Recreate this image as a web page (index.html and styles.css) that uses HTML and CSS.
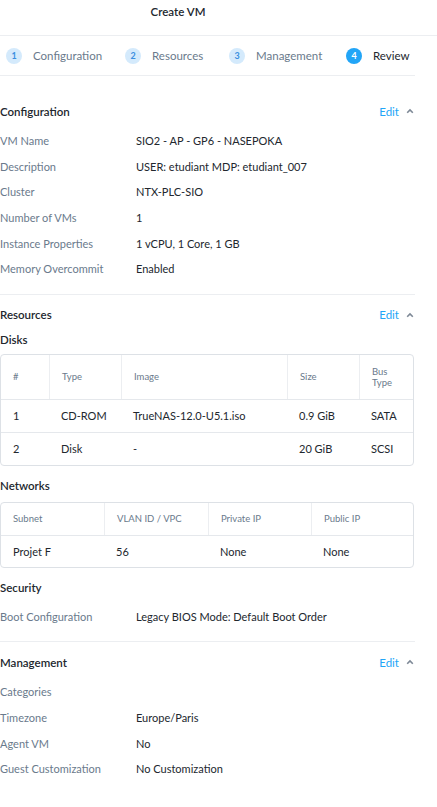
FILE: index.html
```html
<!DOCTYPE html>
<html>
<head>
<meta charset="utf-8">
<link rel="stylesheet" href="styles.css">
</head>
<body>
<div class="page">
  <header class="topbar"><div class="title">Create VM</div></header>
  <div class="main">
    <nav class="stepper">
      <div class="step"><span class="num">1</span><span class="lbl">Configuration</span></div>
      <div class="step"><span class="num">2</span><span class="lbl">Resources</span></div>
      <div class="step"><span class="num">3</span><span class="lbl">Management</span></div>
      <div class="step active"><span class="num">4</span><span class="lbl">Review</span></div>
    </nav>

    <section class="sec first">
      <div class="sec-head"><h2>Configuration</h2><div class="edit">Edit <svg class="caret" width="8" height="6" viewBox="0 0 8 6"><path d="M1.2 4.8 L4 2 L6.8 4.8" fill="none" stroke="#7d8896" stroke-width="1.6"/></svg></div></div>
      <div class="row"><span class="k">VM Name</span><span class="v">SIO2 - AP - GP6 - NASEPOKA</span></div>
      <div class="row"><span class="k">Description</span><span class="v">USER: etudiant MDP: etudiant_007</span></div>
      <div class="row"><span class="k">Cluster</span><span class="v">NTX-PLC-SIO</span></div>
      <div class="row"><span class="k">Number of VMs</span><span class="v">1</span></div>
      <div class="row"><span class="k">Instance Properties</span><span class="v">1 vCPU, 1 Core, 1 GB</span></div>
      <div class="row"><span class="k">Memory Overcommit</span><span class="v">Enabled</span></div>
    </section>

    <section class="sec">
      <div class="sec-head"><h2>Resources</h2><div class="edit">Edit <svg class="caret" width="8" height="6" viewBox="0 0 8 6"><path d="M1.2 4.8 L4 2 L6.8 4.8" fill="none" stroke="#7d8896" stroke-width="1.6"/></svg></div></div>
      <h3>Disks</h3>
      <div class="tbl disks">
        <div class="tr th"><span>#</span><span>Type</span><span>Image</span><span>Size</span><span>Bus<br>Type</span></div>
        <div class="tr"><span>1</span><span>CD-ROM</span><span>TrueNAS-12.0-U5.1.iso</span><span>0.9 GiB</span><span>SATA</span></div>
        <div class="tr"><span>2</span><span>Disk</span><span>-</span><span>20 GiB</span><span>SCSI</span></div>
      </div>
      <h3 class="mt">Networks</h3>
      <div class="tbl nets">
        <div class="tr th"><span>Subnet</span><span>VLAN ID / VPC</span><span>Private IP</span><span>Public IP</span></div>
        <div class="tr"><span>Projet F</span><span>56</span><span>None</span><span>None</span></div>
      </div>
      <h3 class="mt sec-sub">Security</h3>
      <div class="row"><span class="k">Boot Configuration</span><span class="v">Legacy BIOS Mode: Default Boot Order</span></div>
    </section>

    <section class="sec last">
      <div class="sec-head"><h2>Management</h2><div class="edit">Edit <svg class="caret" width="8" height="6" viewBox="0 0 8 6"><path d="M1.2 4.8 L4 2 L6.8 4.8" fill="none" stroke="#7d8896" stroke-width="1.6"/></svg></div></div>
      <div class="row"><span class="k">Categories</span><span class="v"></span></div>
      <div class="row"><span class="k">Timezone</span><span class="v">Europe/Paris</span></div>
      <div class="row"><span class="k">Agent VM</span><span class="v">No</span></div>
      <div class="row"><span class="k">Guest Customization</span><span class="v">No Customization</span></div>
    </section>
  </div>
</div>
</body>
</html>
```
FILE: styles.css
```css
* { box-sizing: border-box; margin: 0; padding: 0; }
html, body { background: #fff; }
body {
  font-family: Lato, "Open Sans", sans-serif;
  font-size: 11px;
  color: #22272e;
}
.page { width: 437px; }
.topbar {
  height: 36px;
  border-bottom: 1px solid #eceef1;
  display: flex;
  align-items: center;
}
.title {
  width: 356px;
  text-align: center;
  font-size: 11.5px;
  font-weight: 600;
  color: #22272e;
  padding-bottom: 12px;
}
.main { width: 415px; }
.stepper {
  height: 40px;
  display: flex;
  align-items: center;
  border-bottom: 1px solid #eceef1;
  padding-left: 6px;
}
.step { display: flex; align-items: center; }
.step .num {
  width: 16px; height: 16px; border-radius: 50%;
  background: #d4eafc; color: #3b8fe0;
  font-size: 9px; font-weight: 700;
  display: flex; align-items: center; justify-content: center;
}
.step .lbl { margin-left: 11px; color: #6a7a8c; font-size: 11.5px; }
.step:nth-child(1) { width: 119px; }
.step:nth-child(2) { width: 104px; }
.step:nth-child(3) { width: 117px; }
.step.active .num { background: #22a5f7; color: #fff; }
.step.active .lbl { color: #22272e; }

.sec { border-bottom: 1px solid #eceef1; padding: 12px 0 12px; }
.sec.first { padding-top: 27px; padding-bottom: 12px; }
.sec.last { border-bottom: none; }
.sec-head { display: flex; justify-content: space-between; align-items: center; height: 16px; }
h2 { font-size: 11.5px; font-weight: 600; color: #22272e; }
h3 { font-size: 11.5px; font-weight: 600; color: #22272e; margin-top: 10px; }
h3.mt { margin-top: 13px; }
.edit { color: #22a5f7; font-size: 11.5px; display: flex; align-items: center; }
.caret { margin-left: 7px; margin-right: 1px; }
.row { display: flex; height: 25.6px; align-items: center; }
.sec-head + .row { margin-top: 9px; }
.k { width: 136px; color: #6a7a8c; flex-shrink: 0; }
.v { color: #22272e; }
.sec-sub + .row { margin-top: 10px; }
.last .sec-head + .row { margin-top: 9px; }

.tbl {
  margin-top: 8px;
  width: 414px;
  border: 1px solid #dde1e6;
  border-radius: 4px;
}
.tbl.nets { margin-top: 10px; }
.tr { display: grid; align-items: center; border-top: 1px solid #e5e8ec; }
.tr:first-child { border-top: none; }
.tr > span { padding-left: 12px; }
.th > span { color: #6a7a8c; font-size: 9.5px; align-self: stretch; display: flex; align-items: center; border-left: 1px solid #eceef1; }
.th > span:first-child { border-left: none; }
.disks .tr { grid-template-columns: 48px 72px 166px 72px 1fr; height: 33px; }
.disks .th { height: 44px; }
.nets .tr { grid-template-columns: 103px 104px 103px 1fr; height: 32px; }
.nets .th { height: 32px; }
```
